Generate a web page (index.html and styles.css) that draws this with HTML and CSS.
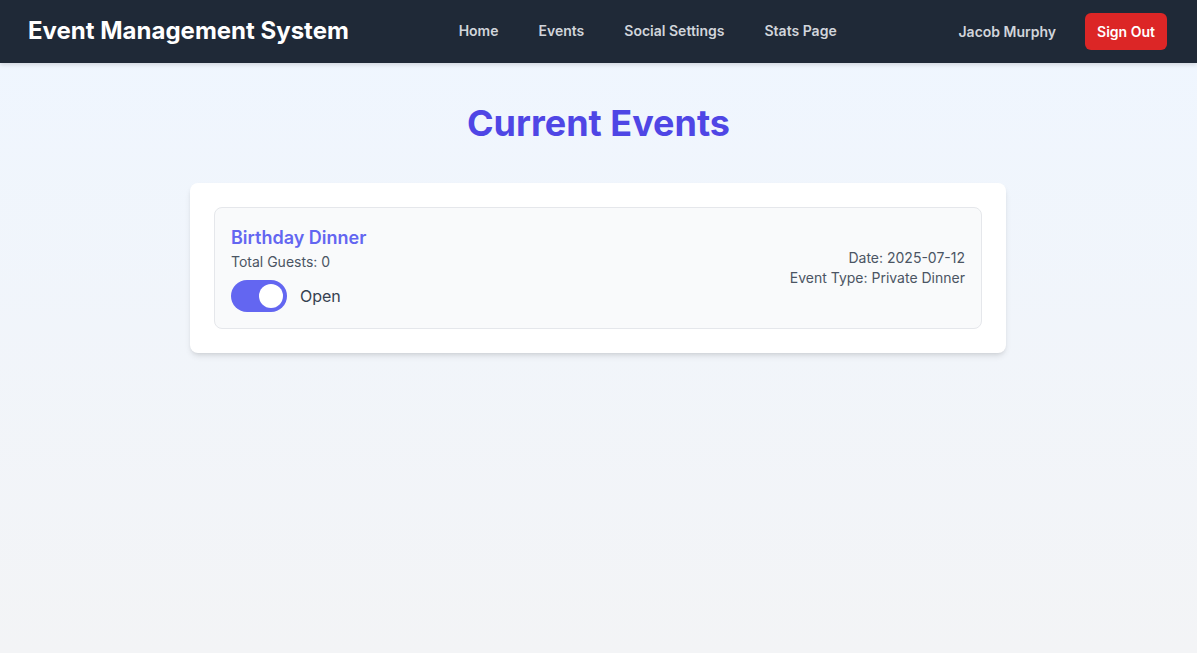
FILE: index.html
```html
<!DOCTYPE html>
<html lang="en">
<head>
<meta charset="utf-8">
<title>Event Management System</title>
<link rel="stylesheet" href="styles.css">
</head>
<body>
<nav class="navbar">
  <div class="brand">Event Management System</div>
  <div class="nav-links">
    <a href="#" class="nav-link">Home</a>
    <a href="#" class="nav-link">Events</a>
    <a href="#" class="nav-link">Social Settings</a>
    <a href="#" class="nav-link">Stats Page</a>
  </div>
  <div class="nav-user">
    <span class="user-name">Jacob Murphy</span>
    <button class="signout">Sign Out</button>
  </div>
</nav>
<main class="main">
  <h1 class="page-title">Current Events</h1>
  <section class="panel">
    <div class="event">
      <div class="event-left">
        <h2 class="event-name">Birthday Dinner</h2>
        <div class="event-meta">Total Guests: 0</div>
        <div class="toggle-row">
          <span class="toggle"><span class="knob"></span></span>
          <span class="toggle-label">Open</span>
        </div>
      </div>
      <div class="event-right">
        <div class="event-meta">Date: 2025-07-12</div>
        <div class="event-meta">Event Type: Private Dinner</div>
      </div>
    </div>
  </section>
</main>
</body>
</html>
```
FILE: styles.css
```css
* { box-sizing: border-box; }
html, body { margin: 0; padding: 0; }
body {
  font-family: Inter, "Noto Sans", sans-serif;
  min-height: 653px;
  background: linear-gradient(to bottom, #eff6ff 0%, #f3f4f6 100%);
  color: #1f2937;
}
.navbar {
  height: 63px;
  background: #1f2937;
  display: flex;
  align-items: center;
  justify-content: space-between;
  padding: 0 30px 1px 28px;
  box-shadow: 0 2px 4px rgba(0,0,0,0.12);
}
.brand {
  color: #ffffff;
  font-size: 24px;
  font-weight: 700;
  line-height: 32px;
}
.nav-links {
  display: flex;
  gap: 40px;
  margin-right: 12px;
}
.nav-link {
  color: #d1d5db;
  font-size: 14px;
  font-weight: 600;
  text-decoration: none;
  line-height: 20px;
}
.nav-user {
  display: flex;
  align-items: center;
  gap: 29px;
}
.user-name {
  color: #d1d5db;
  font-size: 14px;
  font-weight: 600;
}
.signout {
  background: #dc2626;
  color: #ffffff;
  border: none;
  border-radius: 6px;
  font-family: inherit;
  font-size: 14px;
  font-weight: 600;
  line-height: 21px;
  padding: 8px 12px;
}
.main {
  padding-top: 40px;
  display: flex;
  flex-direction: column;
  align-items: center;
}
.page-title {
  margin: 0 0 40px;
  font-size: 36px;
  line-height: 40px;
  font-weight: 700;
  color: #4f46e5;
}
.panel {
  width: 816px;
  margin-right: 1px;
  background: #ffffff;
  border-radius: 8px;
  padding: 24px;
  box-shadow: 0 4px 6px -1px rgba(0,0,0,0.1), 0 2px 4px -2px rgba(0,0,0,0.1);
}
.event {
  background: #f9fafb;
  border: 1px solid #e5e7eb;
  border-radius: 8px;
  padding: 16px;
  display: flex;
  justify-content: space-between;
  align-items: center;
}
.event-name {
  margin: 0;
  font-size: 18px;
  line-height: 28px;
  font-weight: 600;
  color: #6366f1;
}
.event-meta {
  font-size: 14px;
  line-height: 20px;
  color: #4b5563;
}
.event-right { text-align: right; }
.toggle-row {
  display: flex;
  align-items: center;
  margin-top: 8px;
}
.toggle {
  width: 56px;
  height: 32px;
  border-radius: 16px;
  background: #6366f1;
  display: flex;
  align-items: center;
  justify-content: flex-end;
  padding: 4px;
}
.knob {
  width: 24px;
  height: 24px;
  border-radius: 50%;
  background: #ffffff;
}
.toggle-label {
  margin-left: 13px;
  font-size: 16px;
  line-height: 24px;
  color: #374151;
}
```
